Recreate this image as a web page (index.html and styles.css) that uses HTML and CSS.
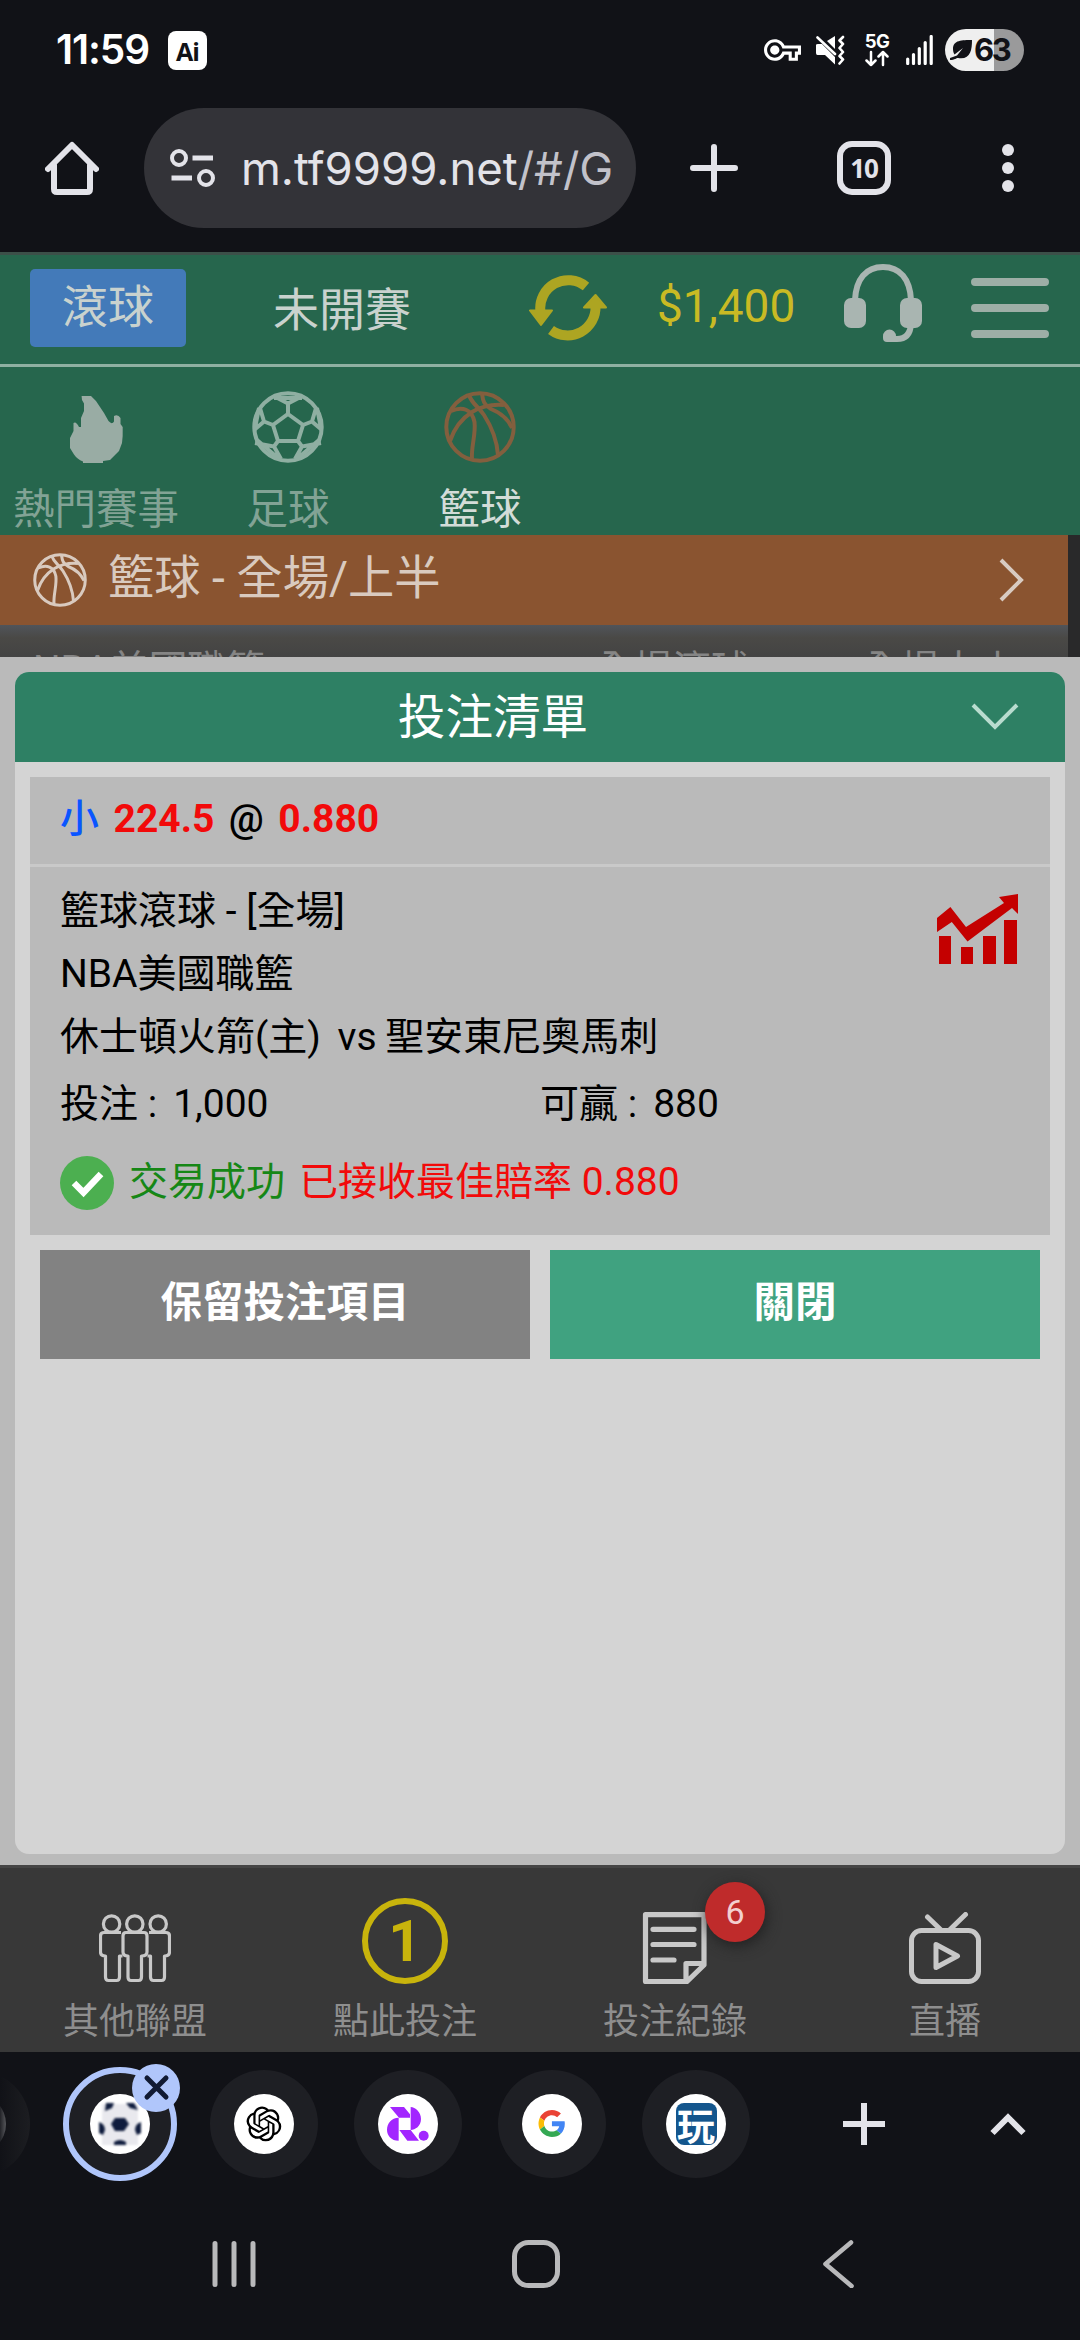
FILE: index.html
```html
<!DOCTYPE html>
<html lang="zh-Hant">
<head>
<meta charset="utf-8">
<title>投注清單</title>
<link rel="stylesheet" href="styles.css">
</head>
<body>
<svg width="0" height="0" class="defs">
  <symbol id="basketball" viewBox="0 0 72 72">
    <g fill="none" stroke="currentColor" stroke-width="4">
      <circle cx="36" cy="36" r="33.7"/>
      <path d="M7 20C18 15 28 18 30.500 31C32 44 27 55 28 68"/>
      <path d="M25 4C28 13 34 15 40 24C49 38 53 50 54 64"/>
      <path d="M6 50C10 38 17 28 28 21C38 15 48 13 60 14"/>
      <path d="M38 3C39 10 40 14 47 18C57 22 64 28 68 37"/>
    </g>
  </symbol>
</svg>

<header class="status">
  <span class="clock">11:59</span>
  <span class="ai">Ai</span>
  <div class="sys">
    <svg class="key" viewBox="0 5 24 14"><path fill="#fff" d="M22 19h-6v-4h-2.68c-1.14 2.42-3.6 4-6.32 4-3.86 0-7-3.14-7-7s3.14-7 7-7c2.72 0 5.17 1.58 6.32 4H24v6h-2v4zm-4-2h2v-4h2v-2H11.94l-.23-.67C11.01 8.34 9.11 7 7 7c-2.76 0-5 2.24-5 5s2.24 5 5 5c2.11 0 4.01-1.34 4.71-3.33l.23-.67H18v4zM7 15c-1.65 0-3-1.35-3-3s1.35-3 3-3 3 1.35 3 3-1.35 3-3 3z"/></svg>
    <svg class="mute" viewBox="0 0 30 30"><path fill="#fff" d="M20 1v13l-8-8zM1 10Q1 9 3 9h4l13 13v7.500L10 20H2.500Q1 20 1 18z"/><path d="M2.500 2.500L20 19M28 2l-3.500 3.500L28 9l-3.500 4L28 17l-3.500 4 3.500 3.500-3.500 4" fill="none" stroke="#fff" stroke-width="2.600" stroke-linecap="round" stroke-linejoin="round"/></svg>
    <div class="net"><b>5G</b><svg viewBox="0 0 24 17" width="24" height="17"><path d="M6 2v13M1.500 10.500L6 15l4.500-4.500M18 15V2M13.500 6.500L18 2l4.500 4.500" fill="none" stroke="#fff" stroke-width="2.500" stroke-linecap="round" stroke-linejoin="round"/></svg></div>
    <svg class="signal" viewBox="0 0 27 30"><path d="M1.700 24v4.500M7.500 19.500v9M13.300 13.500v15M19.200 7.500v21M25.200 1.500v27" stroke="#fff" stroke-width="3.200" stroke-linecap="round"/></svg>
    <div class="battery"><svg viewBox="0 0 22 20" width="22" height="20"><path fill="#111217" d="M22 0C12 0 3 0 3 9c0 2 .5 4 1.500 5.500L13 8l-6 7.500L0 18v2c5 0 6-2 8-2 12 2 14-7 14-18z"/></svg><span>63</span></div>
  </div>
</header>

<nav class="toolbar">
  <svg class="home" viewBox="0 0 54 54"><path d="M3 28L27 4l24 24M9 24v24q0 3 3 3h30q3 0 3-3V24" fill="none" stroke="#e3e3e9" stroke-width="6" stroke-linejoin="round" stroke-linecap="round"/></svg>
  <div class="url">
    <svg viewBox="0 0 46 40" width="46" height="40"><g fill="none" stroke="#e3e3e9"><circle cx="9" cy="10" r="7" stroke-width="4"/><circle cx="36" cy="30" r="7" stroke-width="4"/><path d="M22.500 10H43M1.500 30H22" stroke-width="5"/></g></svg>
    <span>m.tf9999.net<i>/#/G</i></span>
  </div>
  <svg class="plus" viewBox="0 0 48 48"><path d="M24 3v42M3 24h42" stroke="#e3e3e9" stroke-width="6" stroke-linecap="round"/></svg>
  <span class="tabs">10</span>
  <svg class="dots" viewBox="0 0 12 48"><g fill="#e3e3e9"><circle cx="6" cy="6" r="6"/><circle cx="6" cy="24" r="6"/><circle cx="6" cy="42" r="6"/></g></svg>
</nav>

<main class="page">
  <div class="topbar">
    <span class="live">滾球</span>
    <span class="early">未開賽</span>
    <svg class="refresh" viewBox="0 0 78 66"><g fill="none" stroke="#ada522" stroke-width="10"><path d="M57 11.500A28 28 0 0 0 11.500 37"/><path d="M22 55A28 28 0 0 0 66.500 31"/></g><path fill="#ada522" stroke="#ada522" stroke-width="2" stroke-linejoin="round" d="M1 35.500h22L12 50zM55 32.500h22L66.500 20z"/></svg>
    <span class="money">$1,400</span>
    <svg class="headset" viewBox="0 0 78 78"><path d="M11 36C12 15 22 3 39 3s27 12 28 33" fill="none" stroke="#a9b5b1" stroke-width="6"/><path d="M67 60q-1 15-14 15h-8" fill="none" stroke="#a9b5b1" stroke-width="6"/><g fill="#a9b5b1"><rect y="34" width="22" height="30" rx="7"/><rect x="56" y="34" width="22" height="30" rx="7"/><path d="M39 78v-6a6.500 6.500 0 1 1 13 0v6H43q-4 0-4-4z"/></g></svg>
    <svg class="burger" viewBox="0 0 78 60"><path d="M4 4h70M4 30h70M4 56h70" stroke="#9daea6" stroke-width="8" stroke-linecap="round"/></svg>
  </div>

  <div class="sports">
    <div class="sport">
      <svg viewBox="60 391 72 72"><path fill="#99aca4" d="M81.600 396H91Q97 401 100 407L104 413 108.500 421Q112 425 114 421.500V416Q118 414 120.500 418V424L122.700 427Q123 436 122 443L119 451 110 460 103 461V463H83V461.500Q77 459 74 454.500L70 448V438L73.500 431V423Q76 421 79 427H81V418L84 411V403.500L82 400z"/></svg>
      <span>熱門賽事</span>
    </div>
    <div class="sport">
      <svg viewBox="0 0 72 72"><g fill="none" stroke="#8fafa2" stroke-width="4"><circle cx="36" cy="36" r="33.700"/><path d="M36 23L51 34 46 50H26L21 34zM36 23V12.500M51 34l9-3.500M46 50l4 5.500M26 50l-4 5.500M21 34l-9-3.500M23.500 6L36 12.500 48.500 6M64 17l-4 13.500L70 39M69 52l-19 3.500L43 68M29 68l-7-12.500L3 52M2 39l10-8.500L8 17M22 7h28M7 17L3 37M65 17l4 20M67 49L46 67M5 49l21 18"/></g></svg>
      <span>足球</span>
    </div>
    <div class="sport active">
      <svg class="orange"><use href="#basketball"/></svg>
      <span>籃球</span>
    </div>
  </div>

  <div class="market">
    <svg class="ball"><use href="#basketball"/></svg>
    <span>籃球 - 全場/上半</span>
    <svg class="chev" viewBox="0 0 26 44"><path d="M2 2l20 20L2 42" fill="none" stroke="#d8cbc2" stroke-width="4"/></svg>
  </div>
  <div class="league"><span>NBA美國職籃</span><span>全場滾球</span><span>全場大小</span></div>

  <section class="sheet">
    <div class="panel">
      <div class="panel-head"><span>投注清單</span><svg viewBox="0 0 48 28" width="48" height="28"><path d="M2 2l22 22L46 2" fill="none" stroke="#b9dccf" stroke-width="4"/></svg></div>
      <article class="bet">
        <div class="pick"><b class="side">小</b><b>224.5</b><span>@</span><b>0.880</b></div>
        <div class="detail">
          <svg class="chart" viewBox="0 0 82 70"><g fill="#c40000"><path d="M0 24L13.400 13 29 33 67 9 62 3 81 0V20L75 14 30.500 47.500 14.800 28 0 38z"/><path d="M2 42h12v28H2zM24 53h12v17H24zM46 42h13v28H46zM67 26h13v44H67z"/></g></svg>
          <p>籃球滾球 - [全場]</p>
          <p>NBA美國職籃</p>
          <p>休士頓火箭(主) <span class="vs">vs</span> 聖安東尼奧馬刺</p>
          <div class="amounts"><p>投注 :<span>1,000</span></p><p>可贏 :<span>880</span></p></div>
          <div class="result"><svg viewBox="0 0 54 54" width="54" height="54"><circle cx="27" cy="27" r="27" fill="#4caf50"/><path d="M14 27l9.500 9.500L41 18" fill="none" stroke="#fff" stroke-width="6.500"/></svg><span class="ok">交易成功</span><span class="best">已接收最佳賠率 0.880</span></div>
        </div>
      </article>
      <div class="actions"><span class="keep">保留投注項目</span><span class="close">關閉</span></div>
    </div>
  </section>

  <nav class="bottom">
    <div><svg viewBox="0 0 72 72"><g transform="translate(0 2)" fill="none" stroke="#c8c8c8" stroke-width="3.200" stroke-linejoin="round"><circle cx="12.600" cy="10" r="8.200"/><circle cx="35.800" cy="10" r="8.200"/><circle cx="59.200" cy="10" r="8.200"/><path d="M22 18.500H5q-3.500 0-3.500 3.500V38q0 4 5 4V63q0 3.500 3 3.500h8q3 0 3-3.500V42h3"/><path d="M27 18.500h18q3 0 3 3.500V38q0 4-5.500 4V63q0 3.500-3 3.500h-7.500q-3 0-3-3.500V42Q24 42 24 38V22q0-3.500 3-3.500z"/><path d="M50 18.500h17q3.500 0 3.500 3.500V38q0 4-5 4V63q0 3.500-3 3.500h-8q-3 0-3-3.500V42h-3"/></g></svg><span>其他聯盟</span></div>
    <div><b class="one">1</b><span>點此投注</span></div>
    <div><svg viewBox="0 0 72 72"><g fill="none" stroke="#c8c8c8" stroke-width="5.200" stroke-linejoin="round" stroke-linecap="round"><path d="M6.500 2.700H65V53L48 69.500H6.500zM47 69V51.500H64M14 17.300H55M14 32.500H55M14 48H35"/></g></svg><span>投注紀錄</span><em>6</em></div>
    <div><svg viewBox="0 0 72 72"><g fill="none" stroke="#c8c8c8" stroke-width="5" stroke-linejoin="round" stroke-linecap="round"><rect x="2.500" y="18.500" width="67" height="51" rx="10"/><path d="M18.500 5l13 12.500M56.500 2.500L41 17.500M27 32.500v23L48.500 44z"/></g></svg><span>直播</span></div>
  </nav>
</main>

<footer class="chrome">
  <div class="strip">
    <div class="tab edge"><span class="fav"></span></div>
    <div class="tab current"><svg class="fav" viewBox="0 0 60 60"><g class="ballblur"><path fill="#e9e9ee" d="M12 10h36v41H12z"/><g fill="#0f1c3d"><path d="M25 24h10l4 6-5 7h-9l-4-7zM16 9h8l-2 5-7 3zM36 9h8l4 7-8-2zM9 28q6 2 6 8l-2 5-4-2zM51 28q-6 2-6 8l2 5 4-2zM24 48q6-4 12 0v3H24z"/></g></g></svg><svg class="x" viewBox="0 0 48 48"><circle cx="24" cy="24" r="24" fill="#b0c6fb"/><path d="M15 14l19 19M34 14L15 33" stroke="#111a33" stroke-width="5" stroke-linecap="round"/></svg></div>
    <div class="tab"><svg class="fav" viewBox="0 0 60 60"><path transform="translate(12.500 12.500) scale(1.450)" d="M22.2819 9.8211a5.9847 5.9847 0 0 0-.5157-4.9108 6.0462 6.0462 0 0 0-6.5098-2.9A6.0651 6.0651 0 0 0 4.9807 4.1818a5.9847 5.9847 0 0 0-3.9977 2.9 6.0462 6.0462 0 0 0 .7427 7.0966 5.98 5.98 0 0 0 .511 4.9107 6.051 6.051 0 0 0 6.5146 2.9001A5.9847 5.9847 0 0 0 13.2599 24a6.0557 6.0557 0 0 0 5.7718-4.2058 5.9894 5.9894 0 0 0 3.9977-2.9001 6.0557 6.0557 0 0 0-.7475-7.0729zm-9.022 12.6081a4.4755 4.4755 0 0 1-2.8764-1.0408l.1419-.0804 4.7783-2.7582a.7948.7948 0 0 0 .3927-.6813v-6.7369l2.02 1.1686a.071.071 0 0 1 .038.052v5.5826a4.504 4.504 0 0 1-4.4945 4.4944zm-9.6607-4.1254a4.4708 4.4708 0 0 1-.5346-3.0137l.142.0852 4.783 2.7582a.7712.7712 0 0 0 .7806 0l5.8428-3.3685v2.3324a.0804.0804 0 0 1-.0332.0615L9.74 19.9502a4.4992 4.4992 0 0 1-6.1408-1.6464zM2.3408 7.8956a4.485 4.485 0 0 1 2.3655-1.9728V11.6a.7664.7664 0 0 0 .3879.6765l5.8144 3.3543-2.0201 1.1685a.0757.0757 0 0 1-.071 0l-4.8303-2.7865A4.504 4.504 0 0 1 2.3408 7.872zm16.5963 3.8558L13.1038 8.364 15.1192 7.2a.0757.0757 0 0 1 .071 0l4.8303 2.7913a4.4944 4.4944 0 0 1-.6765 8.1042v-5.6772a.79.79 0 0 0-.407-.667zm2.0107-3.0231l-.142-.0852-4.7735-2.7818a.7759.7759 0 0 0-.7854 0L9.409 9.2297V6.8974a.0662.0662 0 0 1 .0284-.0615l4.8303-2.7866a4.4992 4.4992 0 0 1 6.6802 4.66zM8.3065 12.863l-2.02-1.1638a.0804.0804 0 0 1-.038-.0567V6.0742a4.4992 4.4992 0 0 1 7.3757-3.4537l-.142.0805L8.704 5.459a.7948.7948 0 0 0-.3927.6813zm1.0976-2.3654l2.602-1.4998 2.6069 1.4998v2.9994l-2.5974 1.4997-2.6067-1.4997Z"/></svg></div>
    <div class="tab"><svg class="fav" viewBox="474 27 180 180"><g fill="#a226ff"><path d="M510 66h42l18 22v10h-33zM572 66c14 0 31 15 31 36s-17 33-31 33zM536 98v69c-22 0-35-15-35-33s13-36 35-36zM538 135h34l25 32h-35z"/><circle cx="611" cy="152" r="15"/></g></svg></div>
    <div class="tab"><svg class="fav" viewBox="0 0 60 60"><g transform="translate(16.500 16) scale(.56)"><path fill="#ea4335" d="M24 9.500c3.540 0 6.710 1.220 9.210 3.600l6.850-6.850C35.900 2.380 30.470 0 24 0 14.620 0 6.510 5.380 2.560 13.220l7.980 6.190C12.430 13.720 17.740 9.500 24 9.500z"/><path fill="#4285f4" d="M46.980 24.550c0-1.570-.15-3.090-.38-4.550H24v9.020h12.940c-.58 2.960-2.260 5.480-4.780 7.180l7.730 6c4.510-4.180 7.090-10.360 7.090-17.650z"/><path fill="#fbbc05" d="M10.530 28.590c-.48-1.450-.76-2.990-.76-4.590s.27-3.140.76-4.590l-7.980-6.190C.92 16.460 0 20.120 0 24c0 3.880.92 7.540 2.560 10.780l7.970-6.190z"/><path fill="#34a853" d="M24 48c6.480 0 11.930-2.130 15.890-5.810l-7.730-6c-2.150 1.450-4.920 2.300-8.160 2.300-6.260 0-11.570-4.220-13.470-9.910l-7.980 6.190C6.510 42.620 14.620 48 24 48z"/></g></svg></div>
    <div class="tab"><span class="fav"><b class="play">玩</b></span></div>
    <svg class="add" viewBox="0 0 42 42"><path d="M21 0v42M0 21h42" stroke="#e3e3e9" stroke-width="6"/></svg>
    <svg class="up" viewBox="0 0 36 24"><path d="M2.500 21L18 5.500 33.500 21" fill="none" stroke="#e3e3e9" stroke-width="6"/></svg>
  </div>
  <div class="android">
    <svg viewBox="0 0 48 48"><path d="M5 3.500v41M24 3.500v41M43 3.500v41" stroke="#b9b9bb" stroke-width="5" stroke-linecap="round"/></svg>
    <svg viewBox="0 0 48 48"><rect x="2.500" y="2.500" width="43" height="43" rx="14" fill="none" stroke="#b9b9bb" stroke-width="5"/></svg>
    <svg viewBox="0 0 48 48"><path d="M37 2.500L11.500 24 37.500 46" fill="none" stroke="#b9b9bb" stroke-width="4.600" stroke-linecap="round" stroke-linejoin="round"/></svg>
  </div>
</footer>
</body>
</html>
```

FILE: styles.css
```css
* { box-sizing: border-box; }
body { margin: 0; width: 1080px; height: 2340px; overflow: hidden; background: #111217; font-family: Roboto, "Noto Sans CJK TC", sans-serif; color: #000; }
svg { display: block; flex: none; }
p { margin: 0; }
.defs { position: absolute; }

.status { display: flex; align-items: center; height: 100px; padding: 0 56px; color: #fff; }
.clock { width: 96px; font: 600 40.5px/60px Inter, sans-serif; letter-spacing: -1.1px; white-space: nowrap; }
.ai { width: 39px; height: 39px; margin-left: 16px; border-radius: 8px; background: #fff; color: #111217; font: 700 25px/40px "Open Sans", sans-serif; text-align: center; letter-spacing: -1px; }
.sys { display: flex; align-items: center; margin-left: auto; }
.key { width: 37px; height: 22px; margin-right: 14px; }
.mute { width: 30px; height: 30px; }
.net { display: flex; flex-direction: column; align-items: center; gap: 1px; width: 24px; margin: 0 17px 0 20px; }
.net b { font: 700 18.5px/15px Inter, sans-serif; letter-spacing: -.5px; }
.signal { width: 27px; height: 30px; margin-right: 12px; }
.battery { display: flex; align-items: center; width: 79px; height: 42px; padding-left: 5px; gap: 2px; border-radius: 21px; background: linear-gradient(90deg, #efefef 49px, #9a9a9b 49px); color: #111217; font: 700 31px/42px Inter, sans-serif; letter-spacing: -2.5px; }

.toolbar { display: flex; align-items: center; height: 136px; padding: 0 66px 0 45px; }
.home { width: 54px; height: 54px; margin-right: 45px; }
.url { display: flex; align-items: center; gap: 25px; width: 492px; height: 120px; padding-left: 26px; border-radius: 60px; background: #333338; color: #e3e3e9; font: 400 45.5px/121px Inter, sans-serif; white-space: nowrap; }
.url i { font-style: normal; color: #c2c2ca; }
.plus { width: 48px; height: 48px; margin-left: 54px; }
.tabs { width: 54px; height: 54px; margin: 0 111px 0 99px; border: 6px solid #e3e3e9; border-radius: 15px; color: #e3e3e9; font: 700 26px/42px "Open Sans", sans-serif; text-align: center; letter-spacing: -1px; }
.dots { width: 12px; height: 48px; }

.toolbar + .page { margin-top: 16px; }
.page { background: #26664d; }
.topbar { display: flex; align-items: center; height: 115px; padding: 0 30px 3px; border-top: 3px solid #3c5049; border-bottom: 3px solid #8fb0a2; color: #c9d2ce; font-size: 46px; }
.live { width: 156px; height: 78px; margin-right: 87px; border-radius: 5px; background: #437ab9; line-height: 76px; text-align: center; }
.early { width: 138px; margin: -5px 118px 0 0; }
.refresh { width: 78px; height: 66px; }
.money { width: 138px; margin: -4px 49px 0 50px; color: #c9ba24; white-space: nowrap; }
.headset { width: 78px; height: 78px; margin: -10px 49px 0 0; }
.burger { width: 78px; height: 60px; }

.sports { display: flex; height: 168px; padding-top: 24px; }
.sport { display: flex; flex-direction: column; align-items: center; width: 192px; color: #82a395; font-size: 41.5px; line-height: 50px; }
.sport svg { width: 72px; height: 72px; margin-bottom: 22px; }
.sport .orange { color: #835f3e; }
.active { color: #d3dcd8; }

.market { display: flex; align-items: center; height: 90px; padding: 0 44px 0 33px; background: linear-gradient(90deg, #8a5430 1068px, #29292a 1068px); color: #d9cabf; font-size: 46.3px; line-height: 60px; }
.market span { margin: -4px auto 0 21px; }
.ball { width: 54px; height: 54px; }
.chev { width: 26px; height: 44px; margin-right: 11px; }
.league { display: grid; grid-template-columns: 562px 267px 1fr; height: 32px; padding: 17px 0 0 33px; overflow: hidden; background: linear-gradient(90deg, transparent 1068px, #29292a 1068px), linear-gradient(#50545a, #4a4946 40%, #434343); color: #858585; font-size: 38.7px; line-height: 55px; }

.sheet { height: 1208px; padding: 15px; background: #bababa; }
.panel { height: 1182px; border-radius: 14px; overflow: hidden; background: #d4d4d4; }
.panel-head { display: flex; align-items: center; height: 90px; background: #2e8064; color: #fff; font-size: 47.6px; }
.panel-head span { width: 956px; margin-top: -8px; text-align: center; }
.bet { margin: 15px 15px 0; background: #bababa; font-size: 39px; }
.pick { display: flex; align-items: center; gap: 14.5px; height: 90px; padding: 0 30px 3px; border-bottom: 3px solid #c9c9c9; color: #f20a0a; line-height: 60px; }
.pick span { color: #000; font-weight: 500; }
.pick .side { color: #0a55ff; font-weight: 500; }
.detail { position: relative; height: 368px; padding: 13px 30px; line-height: 63px; }
.chart { position: absolute; top: 27px; right: 31px; width: 82px; height: 70px; }
.vs { margin: 0 -1px 0 7px; }
.amounts { display: flex; margin-top: 4px; }
.amounts p { width: 481px; }
.amounts span { margin-left: 16px; }
.result { display: flex; align-items: center; height: 54px; margin-top: 20px; }
.ok { margin: -2px 14px 0 15px; color: #168716; }
.best { margin-top: -2px; color: #f20a0a; }
.actions { display: flex; gap: 20px; padding: 15px 25px 0; color: #fff; font-size: 41.5px; font-weight: 700; line-height: 106px; text-align: center; }
.actions span { flex: 1; height: 109px; }
.keep { background: #828282; }
.close { background: #40a280; }

.bottom { display: flex; height: 187px; border-top: 3px solid #454545; background: #383838; }
.bottom div { position: relative; display: flex; flex-direction: column; align-items: center; justify-content: flex-end; width: 270px; padding-bottom: 5px; color: #8e8e8e; font-size: 36px; line-height: 50px; }
.bottom svg { width: 72px; height: 72px; margin-bottom: 13px; }
.one { width: 86px; height: 86px; margin-bottom: 13px; border: 6px solid #c8b40c; border-radius: 50%; color: #c8b40c; font-size: 58px; line-height: 74px; text-align: center; }
.bottom em { position: absolute; left: 165px; top: 14px; width: 60px; height: 60px; border-radius: 50%; background: #bf2b2b; box-shadow: 2px 4px 14px #222; color: #f3cfcf; font-size: 34px; font-style: normal; line-height: 60px; text-align: center; }

.strip { display: flex; align-items: center; height: 144px; }
.tab { position: relative; display: grid; place-items: center; flex: none; width: 108px; height: 108px; margin-right: 36px; border-radius: 50%; background: #1e1f24; }
.fav { display: grid; place-items: center; width: 60px; height: 60px; border-radius: 50%; background: #fff; }
.edge { margin-left: -78px; background: linear-gradient(90deg, #111217 78px, #1c1d21); }
.edge .fav { background: linear-gradient(90deg, #111217 52px, #55565a); }
.current { width: 114px; height: 114px; margin: 0 33px 0 -3px; border: 6px solid #b0c6fb; }
.ballblur { filter: blur(.8px); }
.x { position: absolute; left: 63px; top: -9px; width: 48px; height: 48px; }
.play { width: 41px; height: 42px; border-radius: 8px; background: #14568d; color: #fff; font: 700 38px/41px "Noto Sans CJK TC", sans-serif; text-align: center; }
.add { width: 42px; height: 42px; margin-left: 57px; }
.up { width: 36px; height: 24px; margin-left: 105px; }
.android { display: flex; gap: 254px; padding: 44px 210px; }
.android svg { width: 48px; height: 48px; }
```
